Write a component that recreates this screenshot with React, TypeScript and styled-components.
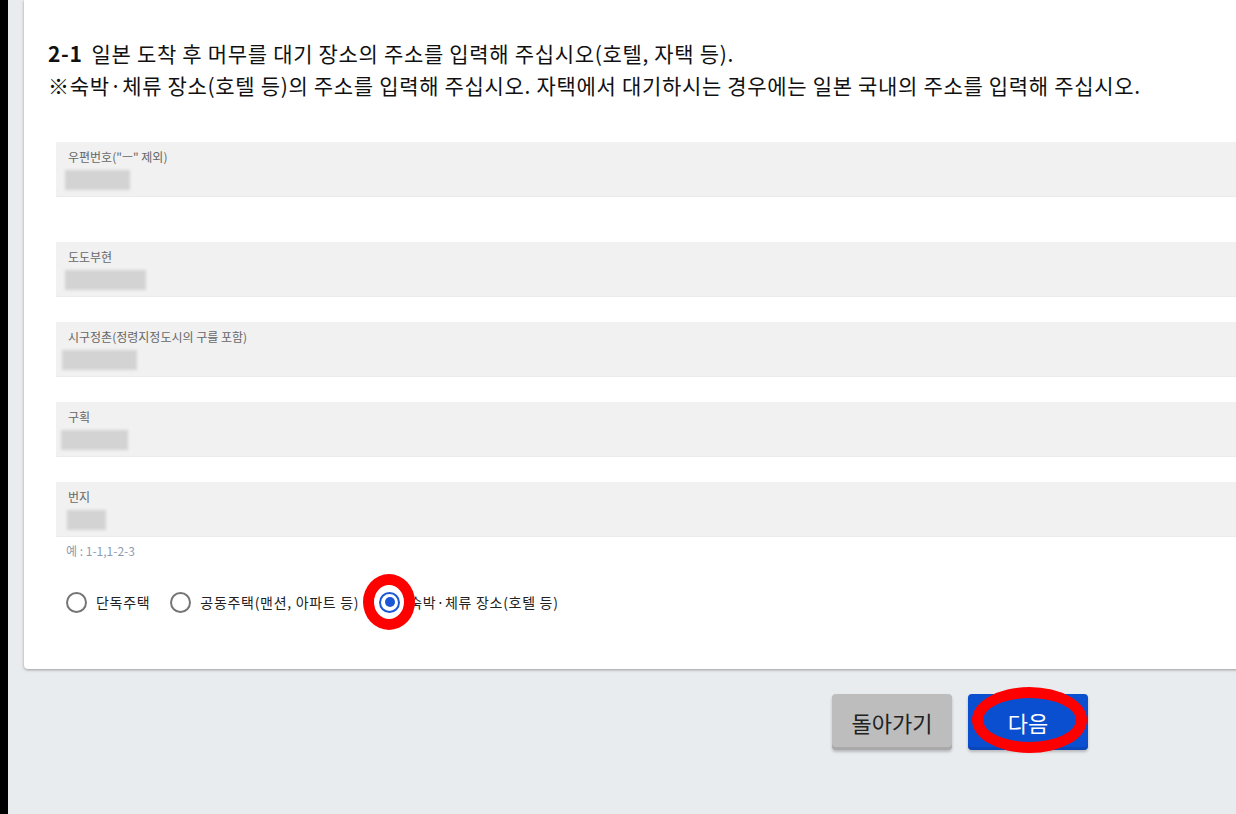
import React from "react";
import styled, { createGlobalStyle } from "styled-components";

const GlobalStyle = createGlobalStyle`
  html, body {
    margin: 0;
    padding: 0;
    background: #e9ecef;
    overflow: hidden;
  }
  body {
    font-family: "Noto Sans CJK KR", "Noto Sans", sans-serif;
    color: #111;
  }
`;

const Page = styled.div`
  display: flex;
  width: 1236px;
  height: 814px;
  overflow: hidden;
`;

const BlackEdge = styled.div`
  width: 8px;
  flex-shrink: 0;
  background: #000;
`;

const Main = styled.div`
  flex: 1;
  min-width: 0;
  display: flex;
  flex-direction: column;
  padding-left: 16px;
`;

const Card = styled.section`
  width: 1260px;
  flex-shrink: 0;
  box-sizing: border-box;
  background: #fff;
  border-radius: 0 0 0 4px;
  box-shadow: 0 1px 3px rgba(0, 0, 0, 0.35);
  padding: 37px 0 56px 24px;
`;

const Heading = styled.div`
  font-size: 21px;
  line-height: 32px;
  letter-spacing: 0.68px;
  color: #111;
  white-space: nowrap;
`;

const Num = styled.b`
  font-weight: 700;
  margin-right: 9px;
`;

const Fields = styled.div`
  margin: 41px 0 0 8px;
  display: flex;
  flex-direction: column;
`;

const FieldBox = styled.div<{ $gap: number }>`
  height: 55px;
  box-sizing: border-box;
  background: #f1f1f1;
  border-bottom: 1px solid #ebebeb;
  padding: 7px 0 0 12px;
  margin-bottom: ${(p) => p.$gap}px;
  display: flex;
  flex-direction: column;
  align-items: flex-start;
`;

const FieldLabel = styled.label`
  font-size: 12px;
  line-height: 16px;
  color: #666;
`;

const Blurred = styled.span<{ $w: number; $dx: number }>`
  display: block;
  width: ${(p) => p.$w}px;
  height: 20px;
  margin: 5px 0 0 ${(p) => p.$dx}px;
  background: #d3d3d3;
  filter: blur(1.5px);
`;

const Helper = styled.div`
  font-size: 12px;
  line-height: 16px;
  color: #8c9db3;
  padding-left: 10px;
  margin-top: 6px;
`;

const RadioRow = styled.div`
  display: flex;
  align-items: center;
  gap: 20px;
  margin: 32px 0 0 18px;
  height: 22px;
`;

const RadioItem = styled.label`
  position: relative;
  display: flex;
  align-items: center;
  gap: 9px;
  font-size: 14px;
  letter-spacing: 0.7px;
  color: #222;
  white-space: nowrap;
`;

const RadioCircle = styled.span<{ $on?: boolean }>`
  width: 21px;
  height: 21px;
  box-sizing: border-box;
  border-radius: 50%;
  border: 2px solid ${(p) => (p.$on ? "#1a56d6" : "#757575")};
  display: flex;
  align-items: center;
  justify-content: center;
  flex-shrink: 0;
  &::after {
    content: "";
    display: ${(p) => (p.$on ? "block" : "none")};
    width: 10px;
    height: 10px;
    border-radius: 50%;
    background: #1a56d6;
  }
`;

const Ring = styled.span<{ $w: number; $h: number; $x: number; $y: number; $t: number }>`
  position: absolute;
  left: ${(p) => p.$x}px;
  top: ${(p) => p.$y}px;
  width: ${(p) => p.$w}px;
  height: ${(p) => p.$h}px;
  box-sizing: border-box;
  border: ${(p) => p.$t}px solid #ff0000;
  border-radius: 50%;
  pointer-events: none;
`;

const ButtonRow = styled.div`
  display: flex;
  justify-content: flex-end;
  gap: 16px;
  margin-top: 25px;
  padding-right: 148px;
`;

const Button = styled.button<{ $primary?: boolean }>`
  position: relative;
  width: 120px;
  height: 56px;
  border: none;
  border-radius: 4px;
  font-family: inherit;
  font-size: 22px;
  background: ${(p) => (p.$primary ? "#0a4fcf" : "#bdbdbd")};
  color: ${(p) => (p.$primary ? "#fff" : "#222")};
  box-shadow: inset 0 -3px 0 rgba(0, 0, 0, 0.1), 0 2px 3px rgba(0, 0, 0, 0.22);
  cursor: pointer;
`;

const fields = [
  { label: '우편번호("ㅡ" 제외)', w: 65, dx: -3, gap: 45 },
  { label: "도도부현", w: 81, dx: -3, gap: 25 },
  { label: "시구정촌(정령지정도시의 구를 포함)", w: 75, dx: -6, gap: 25 },
  { label: "구획", w: 67, dx: -7, gap: 25 },
  { label: "번지", w: 39, dx: -1, gap: 0 },
];

export default function App() {
  return (
    <>
      <GlobalStyle />
      <Page>
        <BlackEdge />
        <Main>
          <Card>
            <Heading>
              <Num>2-1</Num>일본 도착 후 머무를 대기 장소의 주소를 입력해 주십시오(호텔, 자택 등).
            </Heading>
            <Heading>
              ※숙박·체류 장소(호텔 등)의 주소를 입력해 주십시오. 자택에서 대기하시는 경우에는 일본 국내의 주소를 입력해 주십시오.
            </Heading>
            <Fields>
              {fields.map((f) => (
                <FieldBox key={f.label} $gap={f.gap}>
                  <FieldLabel>{f.label}</FieldLabel>
                  <Blurred $w={f.w} $dx={f.dx} />
                </FieldBox>
              ))}
              <Helper>예 : 1-1,1-2-3</Helper>
            </Fields>
            <RadioRow>
              <RadioItem>
                <RadioCircle />
                단독주택
              </RadioItem>
              <RadioItem>
                <RadioCircle />
                공동주택(맨션, 아파트 등)
              </RadioItem>
              <RadioItem>
                <RadioCircle $on />
                숙박·체류 장소(호텔 등)
                <Ring $w={52} $h={56} $x={-16} $y={-18} $t={11} />
              </RadioItem>
            </RadioRow>
          </Card>
          <ButtonRow>
            <Button>돌아가기</Button>
            <Button $primary>
              다음
              <Ring $w={115} $h={66} $x={4} $y={-7} $t={11} />
            </Button>
          </ButtonRow>
        </Main>
      </Page>
    </>
  );
}
